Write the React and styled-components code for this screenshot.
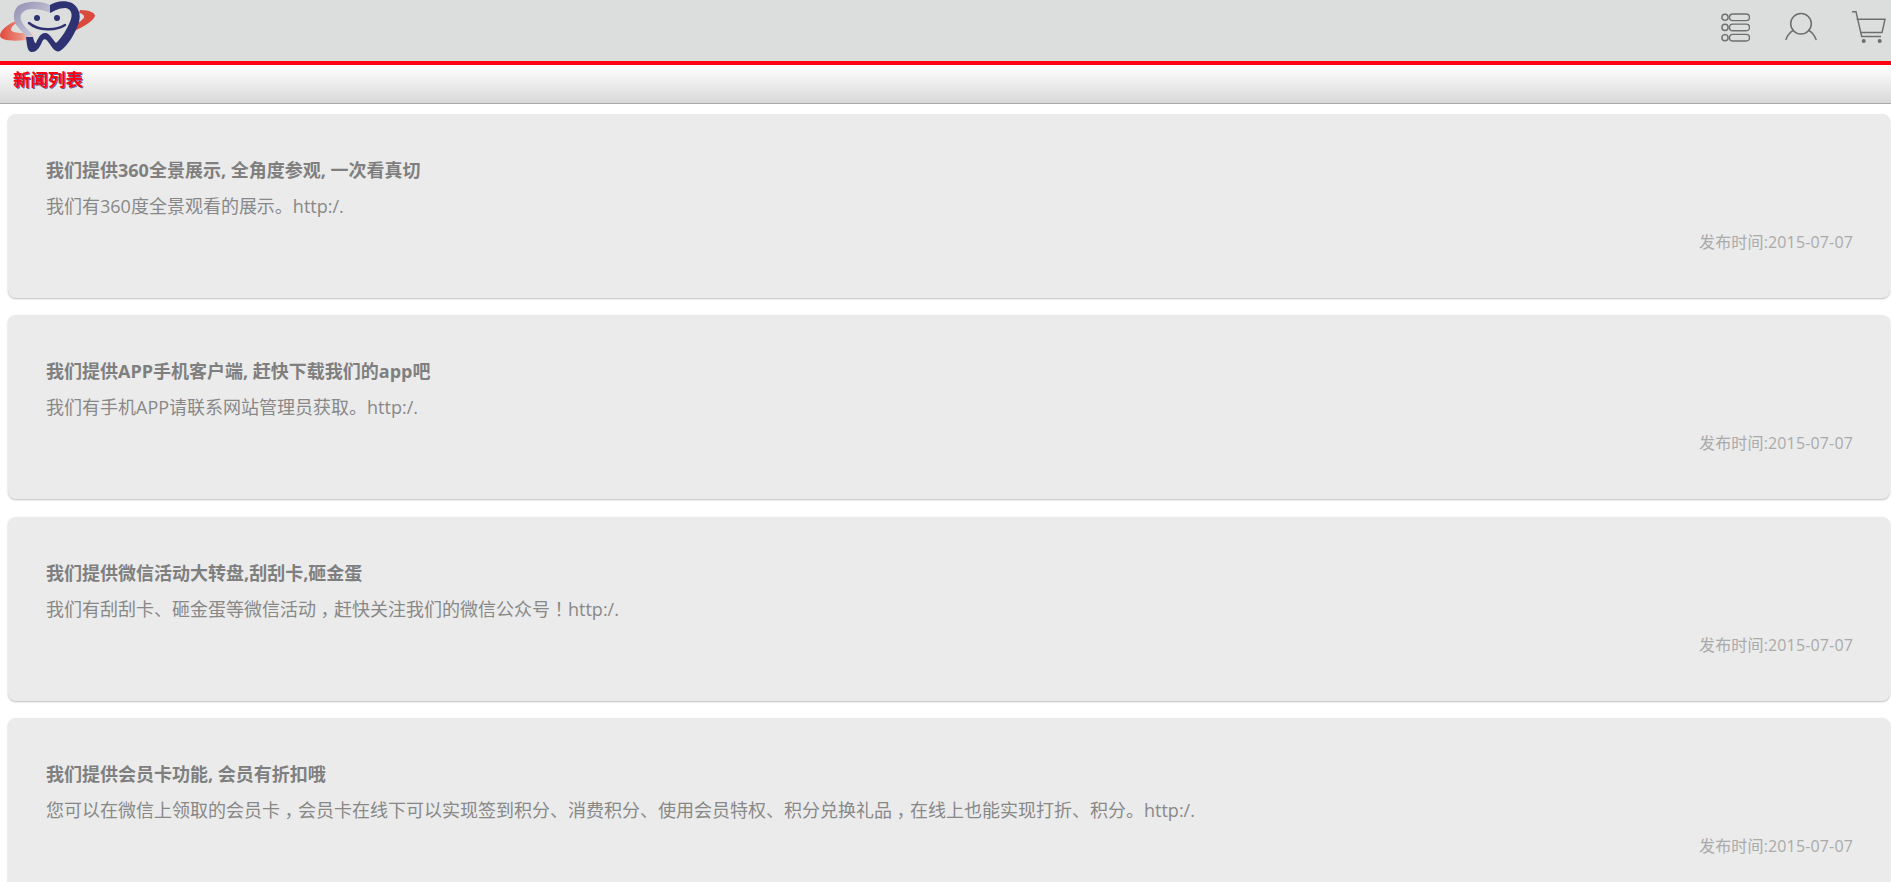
import React from "react";
import styled, { createGlobalStyle } from "styled-components";

const GlobalStyle = createGlobalStyle`
  html, body {
    margin: 0;
    padding: 0;
    background: #fff;
    overflow: hidden;
    height: 882px;
    font-family: "Open Sans", "Noto Sans CJK SC", sans-serif;
  }
`;

const news = [
  {
    title: "我们提供360全景展示, 全角度参观, 一次看真切",
    body: "我们有360度全景观看的展示。http:/.",
  },
  {
    title: "我们提供APP手机客户端, 赶快下载我们的app吧",
    body: "我们有手机APP请联系网站管理员获取。http:/.",
  },
  {
    title: "我们提供微信活动大转盘,刮刮卡,砸金蛋",
    body: "我们有刮刮卡、砸金蛋等微信活动，赶快关注我们的微信公众号！http:/.",
  },
  {
    title: "我们提供会员卡功能, 会员有折扣哦",
    body: "您可以在微信上领取的会员卡，会员卡在线下可以实现签到积分、消费积分、使用会员特权、积分兑换礼品，在线上也能实现打折、积分。http:/.",
  },
];

// full width comma and ! sit in the middle of their cell in the original font
function withPunct(text) {
  return text
    .split(/([，！])/)
    .map((part, i) => (part === "，" || part === "！" ? <Punct key={i}>{part}</Punct> : part));
}

function Logo() {
  return (
    <svg width="97" height="54" viewBox="0 0 97 54">
      <defs>
        <linearGradient id="ring" x1="0" y1="0" x2="1" y2="0">
          <stop offset="0" stopColor="#e0493a" />
          <stop offset="0.6" stopColor="#ea8b7a" />
          <stop offset="1" stopColor="#f3dcd3" />
        </linearGradient>
        <linearGradient id="fade" x1="0" y1="0" x2="1" y2="1">
          <stop offset="0" stopColor="#8f8cb2" />
          <stop offset="1" stopColor="#dcdae4" />
        </linearGradient>
      </defs>
      <path d="M16 21 C6 25 0 31 0 36 C1 41 15 42 34 39 L33 32 C22 34 12 33 11 30 C11 27 13 25 17 23 Z" fill="url(#ring)" />
      <path d="M80 10 C90 10 95 13 95 16 C93 21 84 27 72 32 L75 25 C81 21 85 18 84 16 C83 14 81 13 79 13 Z" fill="#d94a3d" />
      <path d="M50 5 C40 0 25 1 18 6 C12 12 13 22 18 27 C21 31 24 33 26 36 L34 37 C29 30 23 26 21 20 C19 13 25 9 32 9 C38 9 44 10 50 13 Z" fill="url(#fade)" />
      <path d="M50 5 C56 1 65 0 72 3 C79 7 81 15 79 22 C76 32 68 46 60 51 C55 53 52 47 49 43 C47 40 45 38 43 40 C41 44 38 53 31 52 C27 51 27 44 26 37 L33 37 C34 41 35 44 36 43 C38 38 41 32 46 33 C50 34 53 40 56 43 C61 39 68 28 71 19 C73 13 70 8 65 8 C59 8 54 11 50 13 Z" fill="#2e3272" />
      <circle cx="37" cy="18" r="3" fill="#2e3272" />
      <circle cx="57" cy="18" r="3" fill="#2e3272" />
      <path d="M29 23 C38 31 56 31 65 25" fill="none" stroke="#2e3272" strokeWidth="2.5" strokeLinecap="round" />
    </svg>
  );
}

function MenuIcon() {
  return (
    <svg width="30" height="32" viewBox="0 0 30 32" fill="none" stroke="#6e6e6e" strokeWidth="1.4">
      <circle cx="5" cy="6.3" r="3.1" />
      <circle cx="5" cy="16.4" r="3.1" />
      <circle cx="5" cy="26.7" r="3.1" />
      <rect x="9.5" y="3" width="20" height="6.6" rx="3.3" />
      <rect x="9.5" y="13.1" width="20" height="6.6" rx="3.3" />
      <rect x="9.5" y="23.4" width="20" height="6.6" rx="3.3" />
    </svg>
  );
}

function UserIcon() {
  return (
    <svg width="32" height="31" viewBox="0 0 32 31" fill="none" stroke="#6e6e6e" strokeWidth="1.5">
      <circle cx="16" cy="12.7" r="10.3" />
      <path d="M0.7 29 C2.5 24 5 21 9 19" />
      <path d="M31.3 29 C29.5 24 27 21 23 19" />
    </svg>
  );
}

function CartIcon() {
  return (
    <svg width="34" height="34" viewBox="0 0 34 34" fill="none" stroke="#6e6e6e" strokeWidth="1.5">
      <path d="M0 0.7 H4 L9.7 25.6 H29" />
      <path d="M4.6 8.3 H33 L30 21.6 H8.3" />
      <circle cx="11.7" cy="30" r="1.3" fill="#6e6e6e" />
      <circle cx="27.7" cy="30" r="1.3" fill="#6e6e6e" />
    </svg>
  );
}

export default function App() {
  return (
    <Page>
      <GlobalStyle />
      <Header>
        <Logo />
        <HeaderIcons>
          <MenuIcon />
          <UserIcon />
          <CartIcon />
        </HeaderIcons>
      </Header>
      <SubBar>新闻列表</SubBar>
      <NewsList>
        {news.map((item) => (
          <NewsCard key={item.title}>
            <NewsTitle>{item.title}</NewsTitle>
            <NewsBody>{withPunct(item.body)}</NewsBody>
            <NewsDate>发布时间:2015-07-07</NewsDate>
          </NewsCard>
        ))}
      </NewsList>
    </Page>
  );
}

//styles

const Page = styled.div`
  width: 1891px;
  height: 882px;
  overflow: hidden;
`;

const Header = styled.header`
  height: 61px;
  background: #dcdedd;
  border-bottom: 4px solid #ff0013;
  display: flex;
  align-items: flex-start;
  justify-content: space-between;
`;

const HeaderIcons = styled.div`
  display: flex;
  align-items: flex-start;
  gap: 35px;
  padding: 11px 5px 0 0;
`;

const SubBar = styled.div`
  height: 39px;
  box-sizing: border-box;
  padding: 2px 0 0 13px;
  background: linear-gradient(to bottom, #ffffff, #d9d9d9);
  border-bottom: 1px solid #aaa;
  color: #ff0013;
  font-size: 17.5px;
  line-height: 24px;
  font-weight: 700;
  text-shadow: 1px 1px 0 rgba(27, 27, 106, 0.7);
`;

const NewsList = styled.main`
  display: flex;
  flex-direction: column;
  gap: 17.3px;
  padding: 10px 1px 0 7.5px;
`;

const NewsCard = styled.article`
  height: 184px;
  box-sizing: border-box;
  padding: 42px 37px 0 38.5px;
  background: #ebebeb;
  border-radius: 8px;
  box-shadow: 0 1px 2px #bdbdbd;
  flex-shrink: 0;
`;

const NewsTitle = styled.h3`
  margin: 0;
  font-size: 18px;
  line-height: 28px;
  font-weight: 700;
  color: #7f7f7f;
`;

const NewsBody = styled.p`
  margin: 8px 0 0 0;
  font-size: 18px;
  line-height: 28px;
  color: #888;
`;

const Punct = styled.span`
  display: inline-block;
  width: 1em;
  text-align: center;
  font-feature-settings: "halt";
`;

const NewsDate = styled.div`
  margin-top: 9px;
  text-align: right;
  font-size: 16px;
  line-height: 26px;
  letter-spacing: 0.15px;
  color: #aaa;
`;
